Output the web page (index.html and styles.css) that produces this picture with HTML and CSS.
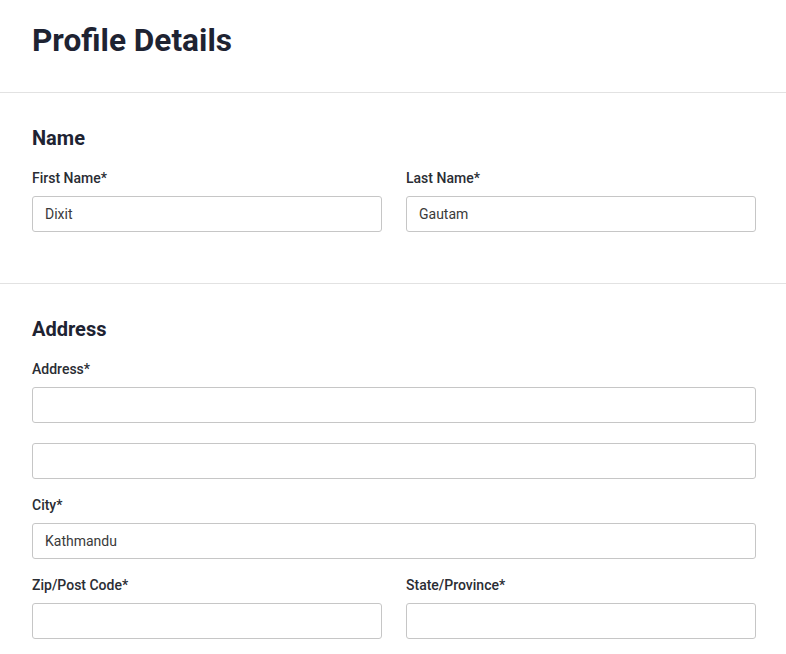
FILE: index.html
```html
<!DOCTYPE html>
<html>
<head>
<meta charset="utf-8">
<link rel="stylesheet" href="styles.css">
</head>
<body>
<div class="page">
  <header class="page-header">
    <h1 class="page-title">Profile Details</h1>
  </header>
  <section class="section section-name">
    <h2 class="section-title">Name</h2>
    <div class="row">
      <div class="field">
        <label class="label">First Name*</label>
        <input class="input" type="text" value="Dixit">
      </div>
      <div class="field">
        <label class="label">Last Name*</label>
        <input class="input" type="text" value="Gautam">
      </div>
    </div>
  </section>
  <section class="section section-address">
    <h2 class="section-title">Address</h2>
    <div class="field">
      <label class="label">Address*</label>
      <input class="input" type="text" value="">
      <input class="input input-extra" type="text" value="">
    </div>
    <div class="field">
      <label class="label">City*</label>
      <input class="input" type="text" value="Kathmandu">
    </div>
    <div class="row">
      <div class="field">
        <label class="label">Zip/Post Code*</label>
        <input class="input" type="text" value="">
      </div>
      <div class="field">
        <label class="label">State/Province*</label>
        <input class="input" type="text" value="">
      </div>
    </div>
  </section>
</div>
</body>
</html>
```
FILE: styles.css
```css
* { box-sizing: border-box; }
html, body { margin: 0; padding: 0; background: #fff; }
body { font-family: Roboto, "Liberation Sans", sans-serif; color: #1f2433; }
.page { width: 786px; }
.page-header {
  padding: 22px 30px 0 32px;
  height: 93px;
  border-bottom: 1px solid #e2e2e2;
}
.page-title {
  margin: 0;
  font-size: 31.6px;
  line-height: 38px;
  font-weight: 700;
  color: #1e2332;
}
.section {
  padding: 33px 30px 33px 32px;
  border-bottom: 1px solid #e2e2e2;
}
.section-address { border-bottom: none; }
.section-title {
  margin: 0 0 20px;
  font-size: 20px;
  line-height: 24px;
  font-weight: 700;
  color: #1e2332;
}
.row {
  display: grid;
  grid-template-columns: 1fr 1fr;
  column-gap: 24px;
}
.field {
  display: flex;
  flex-direction: column;
  margin-bottom: 18px;
}
.label {
  font-size: 14px;
  line-height: 16px;
  font-weight: 500;
  color: #2a2d34;
  margin-bottom: 10px;
}
.input {
  height: 36px;
  width: 100%;
  border: 1px solid #c6c6c6;
  border-radius: 3px;
  padding: 0 12px;
  font-family: Roboto, "Liberation Sans", sans-serif;
  font-size: 14px;
  color: #3a3a3a;
  background: #fff;
  outline: none;
}
.input-extra { margin-top: 20px; }
```
